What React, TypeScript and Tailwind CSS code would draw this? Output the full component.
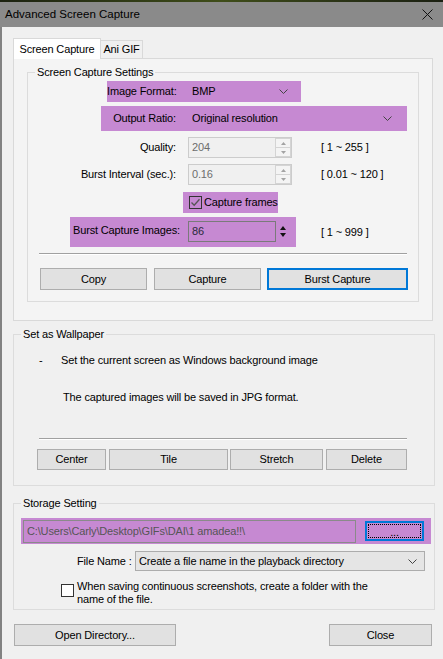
import React from 'react';

const PURPLE = 'bg-[#c689d2]';

const Chevron: React.FC = () => (
  <svg width="9" height="5" viewBox="0 0 9 5" className="shrink-0">
    <polyline points="0.5,0.5 4.5,4.5 8.5,0.5" fill="none" stroke="#444" strokeWidth="1" />
  </svg>
);

const Button: React.FC<{ label: string; w: string; focused?: boolean; h?: string }> = ({ label, w, focused, h = 'h-[22px]' }) => (
  <div
    className={`${w} ${h} flex items-center justify-center whitespace-nowrap bg-[#e1e1e1] ${
      focused ? 'border-2 border-[#0078d7]' : 'border border-[#adadad]'
    }`}
  >
    {label}
  </div>
);

// disabled numeric up/down box
const Spinner: React.FC<{ value: string }> = ({ value }) => (
  <div className="w-[104px] h-[21px] flex border border-[#cccccc] bg-[#f0f0f0]">
    <div className="flex-1 flex items-center pl-[3px] text-[#6d6d6d]">{value}</div>
    <div className="w-[16px] flex flex-col">
      <div className="flex-1 flex items-center justify-center border border-[#d4d4d4] bg-[#f4f4f4]">
        <svg width="5" height="3" viewBox="0 0 5 3"><polygon points="0,3 2.5,0 5,3" fill="#a3a3a3" /></svg>
      </div>
      <div className="flex-1 flex items-center justify-center border border-t-0 border-[#d4d4d4] bg-[#f4f4f4]">
        <svg width="5" height="3" viewBox="0 0 5 3"><polygon points="0,0 2.5,3 5,0" fill="#a3a3a3" /></svg>
      </div>
    </div>
  </div>
);

const Separator: React.FC<{ cls: string }> = ({ cls }) => (
  <div className={`${cls} w-[368px] h-[2px] border-t border-[#a0a0a0] border-b border-b-white`} />
);

export default function App() {
  return (
    <div className="w-[443px] h-[659px] overflow-hidden font-['Liberation_Sans',Arial,sans-serif] text-[11px] leading-[13px] tracking-[-0.15px] text-black whitespace-nowrap">
      {/* desktop strip + title bar */}
      <div className="h-[2px] bg-gradient-to-r from-[#1c2210] via-[#3f4d19] to-[#1b2012]" />
      <div className="h-[25px] bg-[#8a8a8a] flex items-center justify-between pl-[5px] pr-[10px]">
        <span className="text-[11.5px] tracking-normal">Advanced Screen Capture</span>
        <svg width="11" height="11" viewBox="0 0 11 11">
          <line x1="0.5" y1="0.5" x2="10.5" y2="10.5" stroke="#111" strokeWidth="1" />
          <line x1="10.5" y1="0.5" x2="0.5" y2="10.5" stroke="#111" strokeWidth="1" />
        </svg>
      </div>

      <div className="h-[632px] bg-[#f0f0f0] border-l-2 border-[#828282] flex flex-col">
        {/* tabs */}
        <div className="mt-[11px] ml-[11px] flex items-end">
          <div className="relative z-10 -mb-px w-[88px] h-[21px] bg-white border border-b-0 border-[#d9d9d9] flex items-center justify-center">
            Screen Capture
          </div>
          <div className="w-[42px] h-[18px] bg-[#f0f0f0] border border-l-0 border-b-0 border-[#d9d9d9] flex items-center justify-center">
            Ani GIF
          </div>
        </div>
        <div className="ml-[11px] w-[420px] h-[263px] border border-[#d9d9d9] bg-[#f4f4f4] flex flex-col">
          <fieldset className="mt-[7px] mx-[13px] h-[236px] border border-[#dcdcdc]">
            <legend className="ml-[7px] px-[2px]">Screen Capture Settings</legend>
            <div className="flex flex-col">
              {/* image format */}
              <div className={`mt-[2px] ml-[79px] w-[194px] h-[21px] ${PURPLE} flex items-center pr-[13px]`}>
                <span className="w-[69px] text-right">Image Format:</span>
                <span className="ml-[16px] flex-1">BMP</span>
                <Chevron />
              </div>
              {/* output ratio */}
              <div className={`mt-[4px] ml-[73px] w-[306px] h-[25px] ${PURPLE} flex items-center pr-[15px]`}>
                <span className="w-[75px] text-right">Output Ratio:</span>
                <span className="ml-[16px] flex-1">Original resolution</span>
                <Chevron />
              </div>
              {/* quality */}
              <div className="mt-[6px] flex items-center h-[21px]">
                <span className="w-[148px] text-right">Quality:</span>
                <div className="ml-[12px]"><Spinner value="204" /></div>
                <span className="ml-[29px]">[ 1 ~ 255 ]</span>
              </div>
              {/* burst interval */}
              <div className="mt-[6px] flex items-center h-[21px]">
                <span className="w-[148px] text-right">Burst Interval (sec.):</span>
                <div className="ml-[12px]"><Spinner value="0.16" /></div>
                <span className="ml-[29px]">[ 0.01 ~ 120 ]</span>
              </div>
              {/* capture frames */}
              <div className={`mt-[7px] ml-[155px] w-[95px] h-[21px] ${PURPLE} flex items-center pl-[6px]`}>
                <div className="w-[13px] h-[13px] shrink-0 border border-[#333] flex items-center justify-center">
                  <svg width="11" height="11" viewBox="0 0 11 11">
                    <polyline points="1.5,5.5 4.2,8.3 9.5,2.2" fill="none" stroke="#555" strokeWidth="1.3" />
                  </svg>
                </div>
                <span className="ml-[2px]">Capture frames</span>
              </div>
              {/* burst capture images */}
              <div className="mt-[4px] flex items-center">
                <div className={`ml-[42px] w-[226px] h-[30px] ${PURPLE} flex items-start pt-[4px] pl-[3px]`}>
                  <span className="w-[115px] mt-[3px]">Burst Capture Images:</span>
                  <div className="w-[88px] h-[21px] border border-[#7a7a7a] flex items-center pl-[3px] text-[#2a2a3a]">86</div>
                  <div className="ml-[4px] h-[21px] flex flex-col items-center justify-center gap-[3px]">
                    <svg width="6" height="4" viewBox="0 0 6 4"><polygon points="0,4 3,0 6,4" fill="#111" /></svg>
                    <svg width="6" height="4" viewBox="0 0 6 4"><polygon points="0,0 3,4 6,0" fill="#111" /></svg>
                  </div>
                </div>
                <span className="ml-[25px]">[ 1 ~ 999 ]</span>
              </div>
              <Separator cls="mt-[6px] ml-[11px]" />
              <div className="mt-[13px] ml-[12px] flex">
                <Button label="Copy" w="w-[107px]" />
                <div className="ml-[7px]"><Button label="Capture" w="w-[107px]" /></div>
                <div className="ml-[6px]"><Button label="Burst Capture" w="w-[141px]" focused /></div>
              </div>
            </div>
          </fieldset>
        </div>

        {/* set as wallpaper */}
        <fieldset className="mt-[7px] ml-[11px] w-[422px] h-[158px] border border-[#dcdcdc]">
          <legend className="ml-[7px] px-[2px]">Set as Wallpaper</legend>
          <div className="flex flex-col">
            <div className="mt-[13px] ml-[25px] flex">
              <span className="w-[22px]">-</span>
              <span>Set the current screen as Windows background image</span>
            </div>
            <div className="mt-[24px] ml-[49px]">The captured images will be saved in JPG format.</div>
            <Separator cls="mt-[34px] ml-[25px]" />
            <div className="mt-[9px] ml-[23px] flex">
              <Button label="Center" w="w-[69px]" h="h-[21px]" />
              <div className="ml-[3px]"><Button label="Tile" w="w-[119px]" h="h-[21px]" /></div>
              <div className="ml-[2px]"><Button label="Stretch" w="w-[93px]" h="h-[21px]" /></div>
              <div className="ml-[3px]"><Button label="Delete" w="w-[81px]" h="h-[21px]" /></div>
            </div>
          </div>
        </fieldset>

        {/* storage setting */}
        <fieldset className="mt-[11px] ml-[11px] w-[422px] h-[113px] border border-[#dcdcdc]">
          <legend className="ml-[7px] px-[2px]">Storage Setting</legend>
          <div className="flex flex-col">
            <div className={`mt-[8px] ml-[7px] w-[410px] h-[26px] ${PURPLE} flex items-center pl-[2px]`}>
              <div className="w-[333px] h-[23px] border border-[#8a8a8a] flex items-center pl-[3px] text-[#555]">
                C:\Users\Carly\Desktop\GIFs\DAI\1 amadea!!\
              </div>
              <div className="ml-[9px] w-[59px] h-[20px] border-2 border-[#0078d7] p-px">
                <div className="w-full h-full border border-dotted border-black flex items-center justify-center pt-[3px]">...</div>
              </div>
            </div>
            <div className="mt-[7px] ml-[63px] flex items-center h-[20px]">
              <span className="w-[58px]">File Name :</span>
              <div className="w-[290px] h-[20px] bg-[#e5e5e5] border border-[#acacac] flex items-center pl-[3px] pr-[7px]">
                <span className="flex-1">Create a file name in the playback directory</span>
                <Chevron />
              </div>
            </div>
            <div className="mt-[9px] ml-[47px] flex items-start">
              <div className="mt-[4px] w-[13px] h-[13px] border border-[#333] bg-white shrink-0" />
              <span className="ml-[3px]">
                When saving continuous screenshots, create a folder with the
                <br />
                name of the file.
              </span>
            </div>
          </div>
        </fieldset>

        <div className="mt-[14px] ml-[12px] mr-[11px] flex justify-between">
          <Button label="Open Directory..." w="w-[162px]" />
          <Button label="Close" w="w-[103px]" />
        </div>
      </div>
    </div>
  );
}
